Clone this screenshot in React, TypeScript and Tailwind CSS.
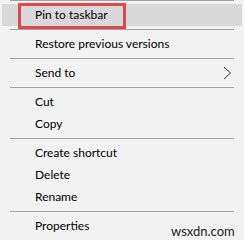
import React from "react";

type Entry = { label: string; sep?: boolean; sub?: boolean; hot?: boolean };

const entries: Array<Entry> = [
  { label: "", sep: true },
  { label: "Pin to taskbar", hot: true },
  { label: "", sep: true },
  { label: "Restore previous versions" },
  { label: "", sep: true },
  { label: "Send to", sub: true },
  { label: "", sep: true },
  { label: "Cut" },
  { label: "Copy" },
  { label: "", sep: true },
  { label: "Create shortcut" },
  { label: "Delete" },
  { label: "Rename" },
  { label: "", sep: true },
  { label: "Properties" },
];

const Chevron = () => (
  <svg width="9" height="14" viewBox="0 0 9 14" fill="none" className="mr-[10px]">
    <path d="M1 1 L7.5 7 L1 13" stroke="#333" strokeWidth="1" />
  </svg>
);

export default function App() {
  return (
    <div
      className="relative w-[244px] h-[240px] overflow-hidden bg-[#f2f2f2] text-[12px] text-black"
      style={{ fontFamily: '"Segoe UI", Lato, "Liberation Sans", sans-serif' }}
    >
      <ul className="-mt-[3px] px-[2px]">
        {entries.map((e, i) =>
          e.sep ? (
            <li key={i} className="py-[3px] px-[8px]">
              <div className="h-px bg-[#a0a0a0]" />
            </li>
          ) : (
            <li
              key={i}
              className={`relative flex items-center justify-between h-[22px] pl-[33px] ${
                e.hot ? "bg-[#d9d9d9]" : ""
              }`}
            >
              <span>{e.label}</span>
              {e.sub && <Chevron />}
              {e.hot && (
                <div className="absolute left-[16px] top-[-1px] w-[108px] h-[26px] border-[3px] border-[#e0474c]" />
              )}
            </li>
          )
        )}
      </ul>
      <span className="absolute left-[171px] top-[222px] text-[13px] text-[#222]">wsxdn.com</span>
    </div>
  );
}
